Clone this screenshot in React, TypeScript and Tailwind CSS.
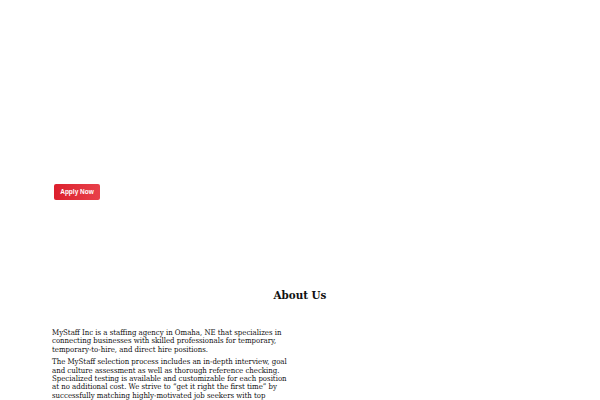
export default function App() {
  return (
    <div className="w-[600px] h-[400px] overflow-hidden bg-white font-['DejaVu_Serif_Condensed','DejaVu_Serif',serif] text-[#111]">
      <section className="h-[270px] px-[54px] pt-[184px]">
        <button
          type="button"
          className="block h-4 w-[46px] rounded-[2px] bg-gradient-to-r from-[#dc1f2d] to-[#e8404a] font-['Liberation_Sans_Narrow','Liberation_Sans',sans-serif] text-[6.5px] font-bold leading-4 text-white"
        >
          Apply Now
        </button>
      </section>

      <h2 className="mt-[17px] text-center text-[11.5px] font-bold leading-4">About Us</h2>

      <div className="mt-[26px] w-[238px] pl-[52px] box-content text-[7.75px] leading-[8.4px]">
        <p>
          MyStaff Inc is a staffing agency in Omaha, NE that specializes in connecting businesses with skilled
          professionals for temporary, temporary-to-hire, and direct hire positions.
        </p>
        <p className="mt-[4px]">
          The MyStaff selection process includes an in-depth interview, goal and culture assessment as well as
          thorough reference checking. Specialized testing is available and customizable for each position at no
          additional cost. We strive to “get it right the first time” by successfully matching highly-motivated job
          seekers with top employers.
        </p>
      </div>
    </div>
  )
}
